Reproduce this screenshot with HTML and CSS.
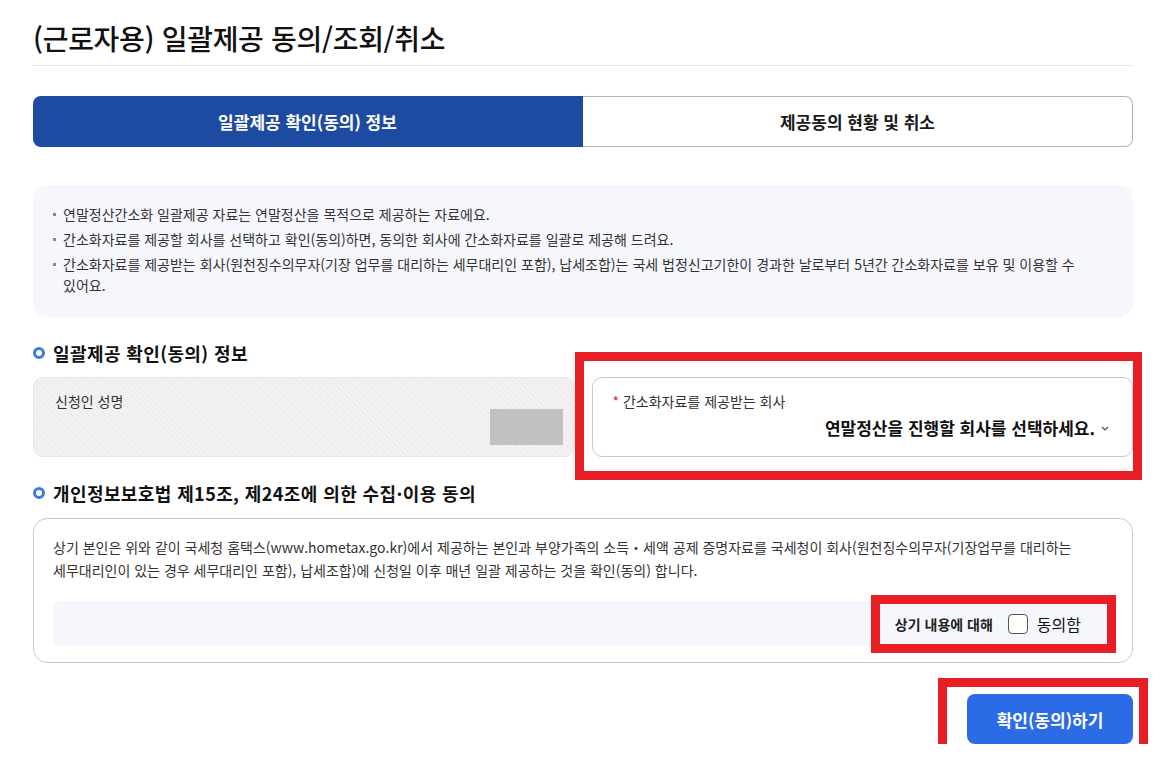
FILE: index.html
```html
<!DOCTYPE html>
<html lang="ko">
<head>
  <meta charset="UTF-8" />
  <meta name="viewport" content="width=device-width, initial-scale=1.0" />
  <title>일괄제공 동의/조회/취소</title>
  <link rel="stylesheet" href="styles.css">
</head>
<body>
  <div class="page">
    <h1 class="page-title">(근로자용) 일괄제공 동의/조회/취소</h1>

    <div class="tabs">
      <div class="tab active">일괄제공 확인(동의) 정보</div>
      <div class="tab">제공동의 현황 및 취소</div>
    </div>

    <ul class="notice">
      <li>연말정산간소화 일괄제공 자료는 연말정산을 목적으로 제공하는 자료에요.</li>
      <li>간소화자료를 제공할 회사를 선택하고 확인(동의)하면, 동의한 회사에 간소화자료를 일괄로 제공해 드려요.</li>
      <li>간소화자료를 제공받는 회사(원천징수의무자(기장 업무를 대리하는 세무대리인 포함), 납세조합)는 국세 법정신고기한이 경과한 날로부터 5년간 간소화자료를 보유 및 이용할 수 있어요.</li>
    </ul>

    <h2 class="sec-title">일괄제공 확인(동의) 정보</h2>
    <div class="fields">
      <div class="field readonly">
        <span class="field-label">신청인 성명</span>
        <span class="masked"></span>
      </div>
      <div class="field select">
        <span class="field-label"><em>*</em> 간소화자료를 제공받는 회사</span>
        <div class="select-value">
          연말정산을 진행할 회사를 선택하세요.
          <svg class="chevron" width="8" height="5" viewBox="0 0 8 5"><path d="M1 1l3 3 3-3" fill="none" stroke="#555" stroke-width="1.2"/></svg>
        </div>
      </div>
    </div>

    <h2 class="sec-title">개인정보보호법 제15조, 제24조에 의한 수집·이용 동의</h2>
    <div class="agree-box">
      <p>상기 본인은 위와 같이 국세청 홈택스(www.hometax.go.kr)에서 제공하는 본인과 부양가족의 소득・세액 공제 증명자료를 국세청이 회사(원천징수의무자(기장업무를 대리하는 세무대리인이 있는 경우 세무대리인 포함), 납세조합)에 신청일 이후 매년 일괄 제공하는 것을 확인(동의) 합니다.</p>
      <div class="agree-row">
        <span class="agree-text">상기 내용에 대해</span>
        <label class="check"><span class="box"></span>동의함</label>
      </div>
    </div>

    <div class="actions">
      <button class="btn-primary">확인(동의)하기</button>
    </div>

    <div class="mark mark-select"></div>
    <div class="mark mark-agree"></div>
    <div class="mark mark-button"></div>
  </div>
</body>
</html>
```

FILE: styles.css
```css
html {
  overflow: hidden;
}
body {
  margin: 0;
  font-family: "Noto Sans CJK KR", "Noto Sans", sans-serif;
  color: #1c1c1c;
  background: #fff;
}
.page {
  position: relative;
  width: 1100px;
  margin-left: 33px;
}
.page-title {
  margin: 0;
  padding-top: 18px;
  padding-bottom: 7px;
  line-height: 40px;
  font-size: 28px;
  font-weight: 500;
  letter-spacing: -0.3px;
  color: #111;
  border-bottom: 1px solid #e6e6e6;
}
.tabs {
  display: flex;
  margin-top: 30px;
  height: 51px;
}
.tab {
  flex: 1;
  display: flex;
  align-items: center;
  justify-content: center;
  font-size: 17px;
  font-weight: 700;
  color: #1a1a1a;
  border: 1px solid #b5b5b5;
  border-left: none;
  border-radius: 0 8px 8px 0;
}
.tab.active {
  background: #1d4ba1;
  border-color: #1d4ba1;
  color: #fff;
  border-radius: 8px 0 0 8px;
}
.notice {
  list-style: none;
  margin: 38px 0 0;
  padding: 19px 30px 21px 20px;
  background: #f6f7fc;
  border-radius: 14px;
  font-size: 14px;
  line-height: 21px;
  color: #333;
  word-break: keep-all;
}
.notice li {
  position: relative;
  padding-left: 10px;
  margin-bottom: 4px;
}
.notice li:last-child {
  margin-bottom: 0;
}
.notice li::before {
  content: "";
  position: absolute;
  left: 0;
  top: 9px;
  width: 3px;
  height: 3px;
  background: #888;
}
.sec-title {
  display: flex;
  align-items: center;
  gap: 8px;
  margin: 23px 0 0;
  font-size: 18px;
  line-height: 26px;
  font-weight: 700;
  letter-spacing: 0.4px;
  color: #111;
}
.sec-title::before {
  content: "";
  width: 6px;
  height: 6px;
  border: 3px solid #3b7be0;
  border-radius: 50%;
}
.fields {
  display: grid;
  grid-template-columns: 1fr 1fr;
  gap: 17px;
  margin-top: 11px;
  margin-bottom: 22px;
}
.field {
  position: relative;
  height: 80px;
  box-sizing: border-box;
  border-radius: 10px;
  padding: 13px 20px 0;
}
.field.readonly {
  padding-left: 21px;
  background: repeating-linear-gradient(45deg, #f2f2f2 0, #f2f2f2 3px, #ebebeb 3px, #ebebeb 4px);
  border: 1px solid #e6e6e6;
}
.field-label {
  display: block;
  font-size: 14px;
  line-height: 20px;
  color: #333;
}
.masked {
  position: absolute;
  right: 11px;
  bottom: 11px;
  width: 73px;
  height: 36px;
  background: #c1c1c1;
}
.field.select {
  border: 1px solid #c9c9c9;
  background: #fff;
}
.field-label em {
  font-style: normal;
  color: #e02a2a;
}
.select-value {
  display: flex;
  align-items: center;
  justify-content: flex-end;
  gap: 6px;
  margin-top: 5px;
  font-size: 17px;
  line-height: 24px;
  font-weight: 700;
  color: #111;
  padding-right: 3px;
}
.agree-box {
  margin-top: 12px;
  border: 1px solid #c9c9c9;
  border-radius: 14px;
  padding: 17px 19px 16px;
}
.agree-box p {
  margin: 0;
  font-size: 14px;
  line-height: 23px;
  color: #333;
  word-break: keep-all;
}
.agree-row {
  display: flex;
  align-items: center;
  justify-content: flex-end;
  height: 45px;
  margin-top: 19px;
  padding-right: 32px;
  background: #f6f7fc;
  border-radius: 8px;
}
.agree-text {
  font-size: 14px;
  font-weight: 700;
  color: #222;
  margin-right: 15px;
}
.check {
  display: flex;
  align-items: center;
  gap: 9px;
  font-size: 16px;
  color: #111;
}
.check .box {
  width: 18px;
  height: 18px;
  border: 1px solid #555;
  border-radius: 4px;
  background: #fff;
}
.actions {
  display: flex;
  justify-content: flex-end;
  margin-top: 31px;
}
.btn-primary {
  width: 166px;
  height: 50px;
  border: none;
  border-radius: 8px;
  background: #2b6be5;
  color: #fff;
  font-family: inherit;
  font-size: 17px;
  font-weight: 700;
}
.mark {
  position: absolute;
  border: 9px solid #e81e25;
  box-sizing: border-box;
}
.mark-select {
  left: 542px;
  top: 352px;
  width: 567px;
  height: 128px;
}
.mark-agree {
  left: 838px;
  top: 595px;
  width: 245px;
  height: 58px;
}
.mark-button {
  left: 905px;
  top: 678px;
  width: 210px;
  height: 82px;
  border-bottom: none;
}
```
